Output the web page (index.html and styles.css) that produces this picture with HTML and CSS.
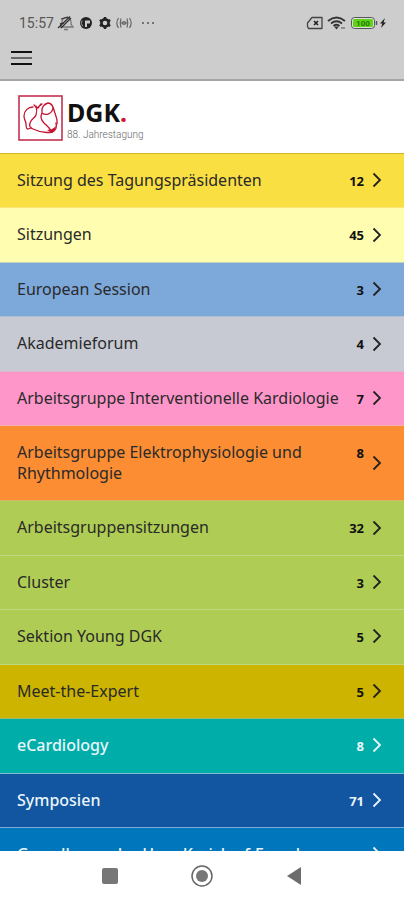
FILE: index.html
```html
<!DOCTYPE html>
<html lang="de">
<head>
<meta charset="utf-8">
<meta name="viewport" content="width=device-width, initial-scale=1">
<title>DGK. 88. Jahrestagung</title>
<link rel="stylesheet" href="styles.css">
</head>
<body>
<svg class="symbols" aria-hidden="true">
  <symbol id="chevron" viewBox="0 0 10 16"><path d="M1.500 1.500 8 8l-6.500 6.500" fill="none" stroke="currentColor" stroke-width="1.800"/></symbol>
</svg>
<div class="app">
  <header class="topbar">
    <div class="status">
      <span class="clock">15:57</span>
      <svg class="status-left" width="102" height="16" viewBox="0 0 102 16" aria-hidden="true">
        <g fill="none" stroke="#333" stroke-width="1.300">
          <path d="M3 12h13l-2-3V7c0-3-2-4.500-4.500-4.500S5 4.500 5 7v2L3 12M7 14.500h4" stroke="#777"/>
          <path d="M1 13 13 1.500M4 4 11 2M3 9l4-1M4 13 14 3"/>
        </g>
        <circle cx="29" cy="8" r="6" fill="#222"/>
        <path d="M28 5.500h5v3h-3V12h-2z" fill="#ccc"/>
        <path d="M25 5.500a5 5 0 0 0 1 6" fill="none" stroke="#999"/>
        <circle cx="48" cy="8" r="3.600" fill="none" stroke="#222" stroke-width="2.600"/>
        <path d="M48 2v2M48 12v2M42.800 5l1.700 1M51.500 10l1.700 1M42.800 11l1.700-1M51.500 6l1.700-1" stroke="#222" stroke-width="2.400"/>
        <g fill="none" stroke="#666" stroke-width="1.200">
          <path d="M61.500 3c-2 3-2 7 0 10M64 3.500c-1 3-1 6 0 9M70 3.500c1 3 1 6 0 9M72.500 3c2 3 2 7 0 10"/>
          <path d="M64 8h6"/><circle cx="67" cy="8" r="1.500"/>
        </g>
        <g fill="#555"><circle cx="86" cy="8" r="1"/><circle cx="91" cy="8" r="1"/><circle cx="96" cy="8" r="1"/></g>
      </svg>
      <svg class="status-right" width="80" height="16" viewBox="0 0 80 16" aria-hidden="true">
        <path d="M4 2.500h10v11H.500l-1-2V8z" fill="none" stroke="#444" stroke-width="1.300" stroke-linejoin="round"/>
        <path d="m6 6 4 4M10 6l-4 4" stroke="#222" stroke-width="1.600"/>
        <g fill="none" stroke="#333" stroke-width="1.700">
          <path d="M20 6q8.500-7 17 0M23 8.500q5.500-4.500 11 0M25.500 11q3-2.500 6 0"/>
        </g>
        <path d="m26 11.500 2.500 3 2.500-3z" fill="#333"/>
        <path d="M33 13h4" stroke="#777" stroke-width="1.500"/>
        <rect x="43.500" y="2.500" width="23" height="11" rx="3" fill="#ddd" stroke="#555"/>
        <rect x="45" y="4" width="20" height="8" rx="1.500" fill="#5ed414"/>
        <path d="M68.500 6v4" stroke="#555" stroke-width="1.500"/>
        <text class="charge" x="55" y="11" text-anchor="middle">100</text>
        <path d="m77 3-5 5.500h2.300L73 13l5-5.500h-2.500z" fill="#222"/>
      </svg>
    </div>
    <button class="menu" type="button" aria-label="Menü">
      <svg width="21" height="16" viewBox="0 0 21 16" aria-hidden="true">
        <path d="M0 2h21M0 14h21" stroke="#111" stroke-width="2"/>
        <path d="M0 8h21" stroke="#666" stroke-width="2"/>
      </svg>
    </button>
  </header>
  <div class="brand">
    <svg width="45" height="46" viewBox="0 0 45 46" aria-hidden="true">
      <rect x="1" y="1" width="43" height="44" fill="#fff" stroke="#c4324f" stroke-width="1.600"/>
      <g fill="none" stroke="#c5122f" stroke-width="1.300" stroke-linecap="round" stroke-linejoin="round">
        <path d="M15 12c-5 0-9 4-9 9 0 4 2 5 2 8 0 3 0 5 2 5l3-1"/>
        <path d="M18 11c1 3 1 6 0 9s-5 4-6 8c-1 3 0 5 3 6 6 3 14 4 19 3 4-1 5-5 4-9"/>
        <path d="M16 10l3 3 5-4M23 9l-3 4"/>
        <path d="M24 17c-1-4 2-8 6-9 3 0 5 3 6 7 1 5 4 8 3 14"/>
        <path d="M24 18c4 3 10 1 11-5M24 18c-2 4-1 7 2 10s5 4 7 8"/>
      </g>
      <path d="M29 35c3 0 6-1 9-4-1 4-2 6-4 7z" fill="#c5122f"/>
    </svg>
    <h1 class="brand-text">
      <span class="brand-name">DGK<span class="dot">.</span></span>
      <span class="brand-sub">88. Jahrestagung</span>
    </h1>
  </div>
  <main class="list">
    <a class="row gold" href="#"><span class="label">Sitzung des Tagungspräsidenten</span><span class="count">12</span><svg class="chevron"><use href="#chevron"/></svg></a>
    <a class="row cream" href="#"><span class="label">Sitzungen</span><span class="count">45</span><svg class="chevron"><use href="#chevron"/></svg></a>
    <a class="row sky" href="#"><span class="label">European Session</span><span class="count">3</span><svg class="chevron"><use href="#chevron"/></svg></a>
    <a class="row silver" href="#"><span class="label">Akademieforum</span><span class="count">4</span><svg class="chevron"><use href="#chevron"/></svg></a>
    <a class="row pink" href="#"><span class="label">Arbeitsgruppe Interventionelle Kardiologie</span><span class="count">7</span><svg class="chevron"><use href="#chevron"/></svg></a>
    <a class="row orange" href="#"><span class="label">Arbeitsgruppe Elektrophysiologie und Rhythmologie</span><span class="count">8</span><svg class="chevron"><use href="#chevron"/></svg></a>
    <a class="row green" href="#"><span class="label">Arbeitsgruppensitzungen</span><span class="count">32</span><svg class="chevron"><use href="#chevron"/></svg></a>
    <a class="row green" href="#"><span class="label">Cluster</span><span class="count">3</span><svg class="chevron"><use href="#chevron"/></svg></a>
    <a class="row green" href="#"><span class="label">Sektion Young DGK</span><span class="count">5</span><svg class="chevron"><use href="#chevron"/></svg></a>
    <a class="row mustard" href="#"><span class="label">Meet-the-Expert</span><span class="count">5</span><svg class="chevron"><use href="#chevron"/></svg></a>
    <a class="row teal light" href="#"><span class="label">eCardiology</span><span class="count">8</span><svg class="chevron"><use href="#chevron"/></svg></a>
    <a class="row navy light" href="#"><span class="label">Symposien</span><span class="count">71</span><svg class="chevron"><use href="#chevron"/></svg></a>
    <a class="row blue light" href="#"><span class="label">Grundlagen der Herz-Kreislauf-Forschung</span><span class="count">4</span><svg class="chevron"><use href="#chevron"/></svg></a>
  </main>
  <nav class="navbar" aria-label="System">
    <button type="button" aria-label="Übersicht"><svg width="24" height="24" viewBox="0 0 24 24"><rect x="4" y="4" width="16" height="16" rx="2" fill="#777"/></svg></button>
    <button type="button" aria-label="Startseite"><svg width="24" height="24" viewBox="0 0 24 24"><circle cx="12" cy="12" r="10" fill="none" stroke="#666" stroke-width="1.500"/><circle cx="12" cy="12" r="6" fill="#777"/></svg></button>
    <button type="button" aria-label="Zurück"><svg width="24" height="24" viewBox="0 0 24 24"><path d="M5 12 19 3v18z" fill="#6c6c6c"/></svg></button>
  </nav>
</div>
</body>
</html>
```
FILE: styles.css
```css
* {
  box-sizing: border-box;
}

body {
  margin: 0;
  font-family: "Noto Sans", "Open Sans", sans-serif;
  color: #222;
  background: #fff;
}

button {
  display: flex;
  padding: 0;
  border: 0;
  background: none;
}

.symbols {
  display: none;
}

.app {
  display: flex;
  flex-direction: column;
  height: 100vh;
}

.topbar {
  padding: 14px 16px 13px 11px;
  border-bottom: 2px solid #a5a5a5;
  background: #cdcdcd;
}

.status {
  display: flex;
  align-items: center;
  height: 18px;
  padding-left: 8px;
}

.clock {
  font: 14px/18px Roboto, sans-serif;
  color: #555;
}

.status-left {
  margin-left: 3px;
}

.status-right {
  margin-left: auto;
  overflow: visible;
}

.charge {
  font: bold 8px Roboto, sans-serif;
  fill: #26760a;
}

.menu {
  margin-top: 18px;
}

.brand {
  display: flex;
  align-items: center;
  gap: 4px;
  padding: 14px 18px 12px;
  background: #fff;
}

.brand-text {
  display: flex;
  flex-direction: column;
  margin: 0;
  font-weight: 400;
}

.brand-name {
  font: bold 25px/34px "Noto Sans", sans-serif;
  color: #111;
}

.dot {
  color: #d3122b;
}

.brand-sub {
  font: 300 10px/12px Roboto, sans-serif;
  color: #666;
}

.list {
  flex: 1;
  min-height: 0;
  overflow: hidden;
  border-top: 1px solid #d1b62c;
}

.row {
  display: flex;
  align-items: center;
  padding: 16px 22px 17px 17px;
  border-bottom: 1px solid #d0d0c0;
  font-size: 16px;
  line-height: 1.28;
  color: #2a2a2a;
  text-decoration: none;
}

.label {
  flex: 1;
}

.count {
  align-self: flex-start;
  height: 20px;
  margin: 0 8px 0 12px;
  font-size: 13px;
  font-weight: 700;
  line-height: 22px;
  color: #111;
}

.chevron {
  width: 10px;
  height: 16px;
  color: #222;
}

.gold { background: #f9df42; border-color: #f9e878; }
.cream { background: #fffeb0; border-color: #c5d3b8; }
.sky { background: #7da8da; border-color: #b5bfd4; }
.silver { background: #c7cad2; border-color: #dab9cd; }
.pink { background: #ff96ca; border-color: #f3b1b1; }
.orange { background: #fc8d33; border-color: #d9b56c; }
.green { background: #afcd54; border-color: #bfd881; }
.mustard { background: #ccb400; border-color: #9bbd73; }
.teal { background: #00ada8; border-color: #82b9ce; }
.navy { background: #1255a1; border-color: #7ba9d4; }
.blue { background: #0077bd; border-color: #7ba9d4; }

.light,
.light .count,
.light .chevron {
  color: #e9f5fa;
}

.light .label {
  font-weight: 500;
}

.navbar {
  display: flex;
  justify-content: center;
  gap: 68px;
  padding: 13px 0 12px;
  background: #fff;
}
```
